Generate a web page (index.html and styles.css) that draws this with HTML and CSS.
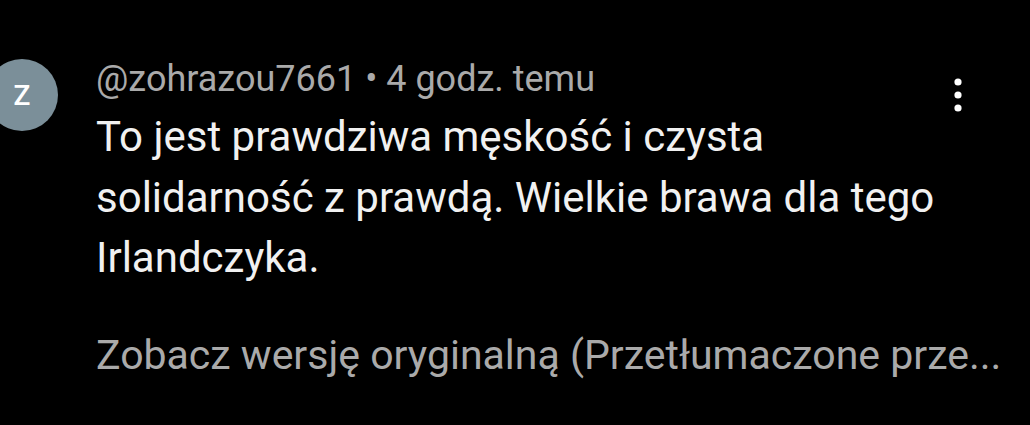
FILE: index.html
```html
<!DOCTYPE html>
<html lang="pl">
<head>
<meta charset="utf-8">
<link rel="stylesheet" href="styles.css">
</head>
<body>
<div class="comment">
  <div class="avatar-col">
    <div class="avatar">Z</div>
  </div>
  <div class="content">
    <div class="meta">@zohrazou7661 • 4 godz. temu</div>
    <p class="body-text">To jest prawdziwa męskość i czysta<br>solidarność z prawdą. Wielkie brawa dla tego<br>Irlandczyka.</p>
    <div class="translate">Zobacz wersję oryginalną (Przetłumaczone prze...</div>
  </div>
  <div class="menu">
    <svg width="8" height="34" viewBox="0 0 8 34"><circle cx="4" cy="4" r="3.6" fill="#fff"/><circle cx="4" cy="17" r="3.6" fill="#fff"/><circle cx="4" cy="30" r="3.6" fill="#fff"/></svg>
  </div>
</div>
</body>
</html>
```
FILE: styles.css
```css
html, body {
  margin: 0;
  padding: 0;
  background: #000;
  width: 1030px;
  height: 425px;
  overflow: hidden;
}
body {
  font-family: Roboto, "Noto Sans", sans-serif;
  color: #f1f1f1;
}
.comment {
  display: flex;
  align-items: flex-start;
  padding-top: 59px;
}
.avatar-col {
  width: 96px;
  flex: none;
  overflow: hidden;
}
.avatar {
  width: 72px;
  height: 72px;
  margin-left: -14px;
  border-radius: 50%;
  background: #7b8f99;
  color: #fff;
  font-size: 28px;
  font-weight: 500;
  display: flex;
  align-items: center;
  justify-content: center;
}
.content {
  flex: 1;
  min-width: 0;
}
.meta {
  color: #aaaaaa;
  font-size: 36px;
  line-height: 40px;
  white-space: nowrap;
}
.body-text {
  margin: 8px 0 0;
  font-size: 42px;
  line-height: 60.5px;
  color: #f1f1f1;
}
.translate {
  margin-top: 42px;
  color: #aaaaaa;
  font-size: 41px;
  line-height: 48px;
  white-space: nowrap;
}
.menu {
  width: 76px;
  flex: none;
  padding-top: 19px;
  display: flex;
}
```
